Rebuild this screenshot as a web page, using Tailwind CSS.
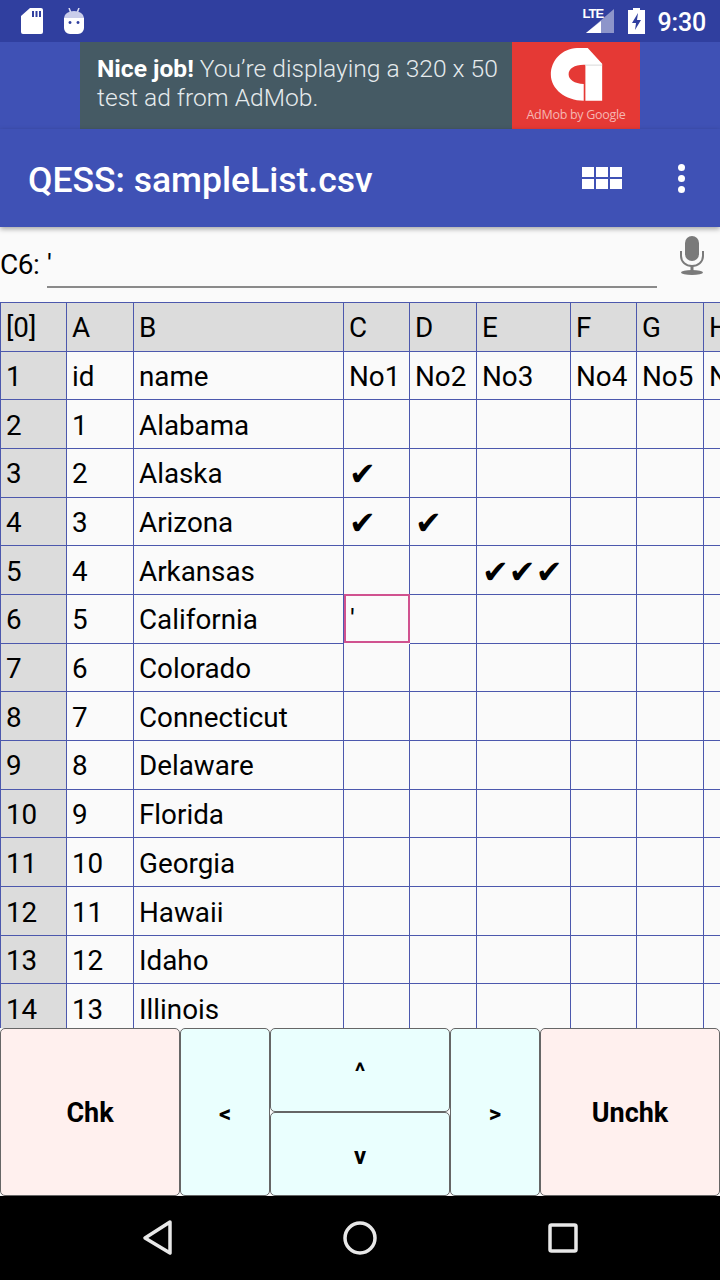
<!DOCTYPE html>
<html lang="en">
<head>
    <meta charset="UTF-8" />
    <meta name="viewport" content="width=device-width, initial-scale=1.0"/>
    <title>QESS: sampleList.csv</title>
    <script src="https://cdn.jsdelivr.net/npm/@tailwindcss/browser@4"></script>
</head>
<body class="w-[720px] h-[1280px] overflow-hidden flex flex-col bg-[#fafafa] text-black font-['Roboto','DejaVu_Sans',sans-serif]">

<!-- Status bar -->
<div class="h-[42px] shrink-0 bg-[#303f9f] text-white flex items-center pl-[21px] pr-[14px]">
    <svg class="w-[22px] h-[26px]" viewBox="0 0 22 26" fill="#fff">
        <path fill-rule="evenodd" d="M9 0h11a2 2 0 0 1 2 2v22a2 2 0 0 1-2 2H2a2 2 0 0 1-2-2V8zM11 3v6h2V3zM14.500 3v6h2V3zM18 3v6h2V3z"/>
    </svg>
    <svg class="w-[22px] h-[26px] ml-[20px] -mt-[1px]" viewBox="0 0 22 26">
        <path d="M6 0l2 5M16 0l-2 5" stroke="#dfe1f3" stroke-width="1.500"/>
        <path d="M1 10a10 7 0 0 1 20 0z" fill="#c9cdea"/>
        <path fill-rule="evenodd" d="M1 10h20v10a6 6 0 0 1-6 6H7a6 6 0 0 1-6-6zM7 13a1.500 1.500 0 1 0 .01 0zM15 13a1.500 1.500 0 1 0 .01 0z" fill="#fff"/>
    </svg>
    <div class="ml-auto flex items-center">
        <div class="relative w-[31px] h-[24px]">
            <svg class="absolute left-[3px] top-0 w-[30px] h-[24px]" viewBox="0 0 30 24">
                <path d="M28 0v24H0z" fill="#fff" fill-opacity=".45"/>
                <path d="M15 12v12H0z" fill="#fff"/>
            </svg>
            <span class="absolute left-0 top-[-5px] text-[13px] leading-[20px] font-bold tracking-[-1px] font-['Liberation_Sans']">LTE</span>
        </div>
        <svg class="w-[17px] h-[26px] ml-[14px]" viewBox="0 0 17 26" fill="#fff">
            <path fill-rule="evenodd" d="M5 0h7v2h5v24H0V2h5zM10 5L4 15h4l-1 7 6-10H9z"/>
        </svg>
        <span class="ml-[13px] text-[25px] font-medium leading-none mt-[2px] tracking-[-0.2px]">9:30</span>
    </div>
</div>

<!-- Ad -->
<div class="h-[87px] shrink-0 bg-[#3f51b5] flex justify-center relative z-10">
    <div class="w-[432px] bg-[#455a64] text-[#e6ebed] text-[24.6px] leading-[28.5px] font-light pl-[17px] pt-[13px]">
        <span class="font-bold text-white">Nice job!</span> You’re displaying a 320 x 50<br>test ad from AdMob.
    </div>
    <div class="w-[128px] bg-[#e53935] flex flex-col items-center">
        <svg class="w-[53px] h-[53px] mt-[6px]" viewBox="150 18 157 158">
            <path fill="#fff" d="M230 18C185 20 152 55 152 97C152 140 195 175 250 175V125C222 124 205 112 205 96C205 80 222 68 250 68H255V175H305V65L262 18Z"/>
            <path d="M255 69H305" stroke="#d8d8d8" stroke-width="3"/>
        </svg>
        <span class="text-[12.5px] leading-[16px] mt-[6px] text-[#f6b6b2] tracking-[-0.3px] font-['Open_Sans']">AdMob by Google</span>
    </div>
</div>

<!-- Toolbar -->
<div class="h-[98px] shrink-0 bg-[#3f51b5] text-white flex items-center pl-[28px] shadow-[0_2px_5px_rgba(0,0,0,0.35)] relative z-10">
    <span class="text-[35.5px] font-medium leading-none mt-[5px]">QESS: sampleList.csv</span>
    <div class="ml-auto grid grid-cols-3 gap-[2px] w-[40px]">
        <div class="h-[10px] bg-white"></div><div class="h-[10px] bg-white"></div><div class="h-[10px] bg-white"></div>
        <div class="h-[10px] bg-white"></div><div class="h-[10px] bg-white"></div><div class="h-[10px] bg-white"></div>
    </div>
    <div class="ml-[56px] mr-[35px] flex flex-col gap-[4px]">
        <div class="w-[7px] h-[7px] rounded-full bg-white"></div>
        <div class="w-[7px] h-[7px] rounded-full bg-white"></div>
        <div class="w-[7px] h-[7px] rounded-full bg-white"></div>
    </div>
</div>

<!-- Cell editor -->
<div class="h-[75px] shrink-0 flex items-start relative">
    <span class="text-[28px] leading-[32px] mt-[22px] w-[47px] shrink-0 tracking-[-0.5px]">C6:</span>
    <div class="w-[610px] h-[61px] border-b-2 border-[#8a8a8a] text-[28px] leading-[32px] pt-[22px]">'</div>
    <svg class="w-[26px] h-[40px] ml-[22px] mt-[9px]" viewBox="0 0 26 40" fill="#7a7a7a">
        <rect x="6" y="0" width="14" height="25" rx="7"/>
        <path d="M2 15v5c0 6 5 10 11 10s11-4 11-10v-5" fill="none" stroke="#7a7a7a" stroke-width="2"/>
        <rect x="11.500" y="29" width="3" height="6"/>
        <ellipse cx="13" cy="36.500" rx="11" ry="2.500"/>
    </svg>
</div>

<!-- Sheet -->
<div class="flex-1 min-h-0 overflow-hidden">
    <div class="w-[800px] border-t border-[#4c58ad] text-[27.8px] leading-none grid grid-cols-[67px_67px_210px_66px_67px_94px_66px_67px_67px] auto-rows-[48.68px] [&>div]:border-r [&>div]:border-b [&>div]:border-[#4c58ad] [&>div]:flex [&>div]:items-center [&>div]:pl-[5px] [&>div]:pt-[3px] [&>div]:whitespace-nowrap [&>div]:overflow-hidden [&>div:nth-child(9n+1)]:bg-[#dcdcdc] [&>div:nth-child(9n+1)]:border-l [&>div:nth-child(-n+9)]:bg-[#dcdcdc] [&>div:nth-child(10)]:bg-[#fafafa]">
        <div>[0]</div><div>A</div><div>B</div><div>C</div><div>D</div><div>E</div><div>F</div><div>G</div><div>H</div>
        <div>1</div><div>id</div><div>name</div><div>No1</div><div>No2</div><div>No3</div><div>No4</div><div>No5</div><div>No6</div>
        <div>2</div><div>1</div><div>Alabama</div><div></div><div></div><div></div><div></div><div></div><div></div>
        <div>3</div><div>2</div><div>Alaska</div><div class="text-[32px] font-bold">✔</div><div></div><div></div><div></div><div></div><div></div>
        <div>4</div><div>3</div><div>Arizona</div><div class="text-[32px] font-bold">✔</div><div class="text-[32px] font-bold">✔</div><div></div><div></div><div></div><div></div>
        <div>5</div><div>4</div><div>Arkansas</div><div></div><div></div><div class="text-[32px] font-bold">✔✔✔</div><div></div><div></div><div></div>
        <div>6</div><div>5</div><div>California</div><div class="!border-2 !border-[#d0528f] !pl-[4px] -translate-y-px">'</div><div></div><div></div><div></div><div></div><div></div>
        <div>7</div><div>6</div><div>Colorado</div><div></div><div></div><div></div><div></div><div></div><div></div>
        <div>8</div><div>7</div><div>Connecticut</div><div></div><div></div><div></div><div></div><div></div><div></div>
        <div>9</div><div>8</div><div>Delaware</div><div></div><div></div><div></div><div></div><div></div><div></div>
        <div>10</div><div>9</div><div>Florida</div><div></div><div></div><div></div><div></div><div></div><div></div>
        <div>11</div><div>10</div><div>Georgia</div><div></div><div></div><div></div><div></div><div></div><div></div>
        <div>12</div><div>11</div><div>Hawaii</div><div></div><div></div><div></div><div></div><div></div><div></div>
        <div>13</div><div>12</div><div>Idaho</div><div></div><div></div><div></div><div></div><div></div><div></div>
        <div>14</div><div>13</div><div>Illinois</div><div></div><div></div><div></div><div></div><div></div><div></div>
    </div>
</div>

<!-- Buttons -->
<div class="h-[168px] shrink-0 flex font-bold [&_button]:border [&_button]:border-[#666] [&_button]:rounded-[5px] [&_button]:pt-[3px]">
    <button class="w-[180px] bg-[#fff0ee] text-[27px]">Chk</button>
    <button class="w-[90px] bg-[#eafffe] text-[24px]">&lt;</button>
    <div class="w-[180px] flex flex-col">
        <button class="h-[84px] bg-[#eafffe] text-[24px]">^</button>
        <button class="h-[84px] bg-[#eafffe] text-[24px]">v</button>
    </div>
    <button class="w-[90px] bg-[#eafffe] text-[24px]">&gt;</button>
    <button class="w-[180px] bg-[#fff0ee] text-[27px]">Unchk</button>
</div>

<!-- Navigation bar -->
<div class="h-[84px] shrink-0 bg-black flex items-center justify-center relative">
    <svg class="w-[720px] h-[84px]" viewBox="0 0 720 84" fill="none" stroke="#e8e8e8" stroke-width="3.500" stroke-linejoin="round">
        <path d="M170 26L145 42L170 57Z"/>
        <circle cx="360" cy="42" r="15"/>
        <rect x="550" y="29" width="26" height="26" rx="1.500"/>
    </svg>
</div>

</body>
</html>
